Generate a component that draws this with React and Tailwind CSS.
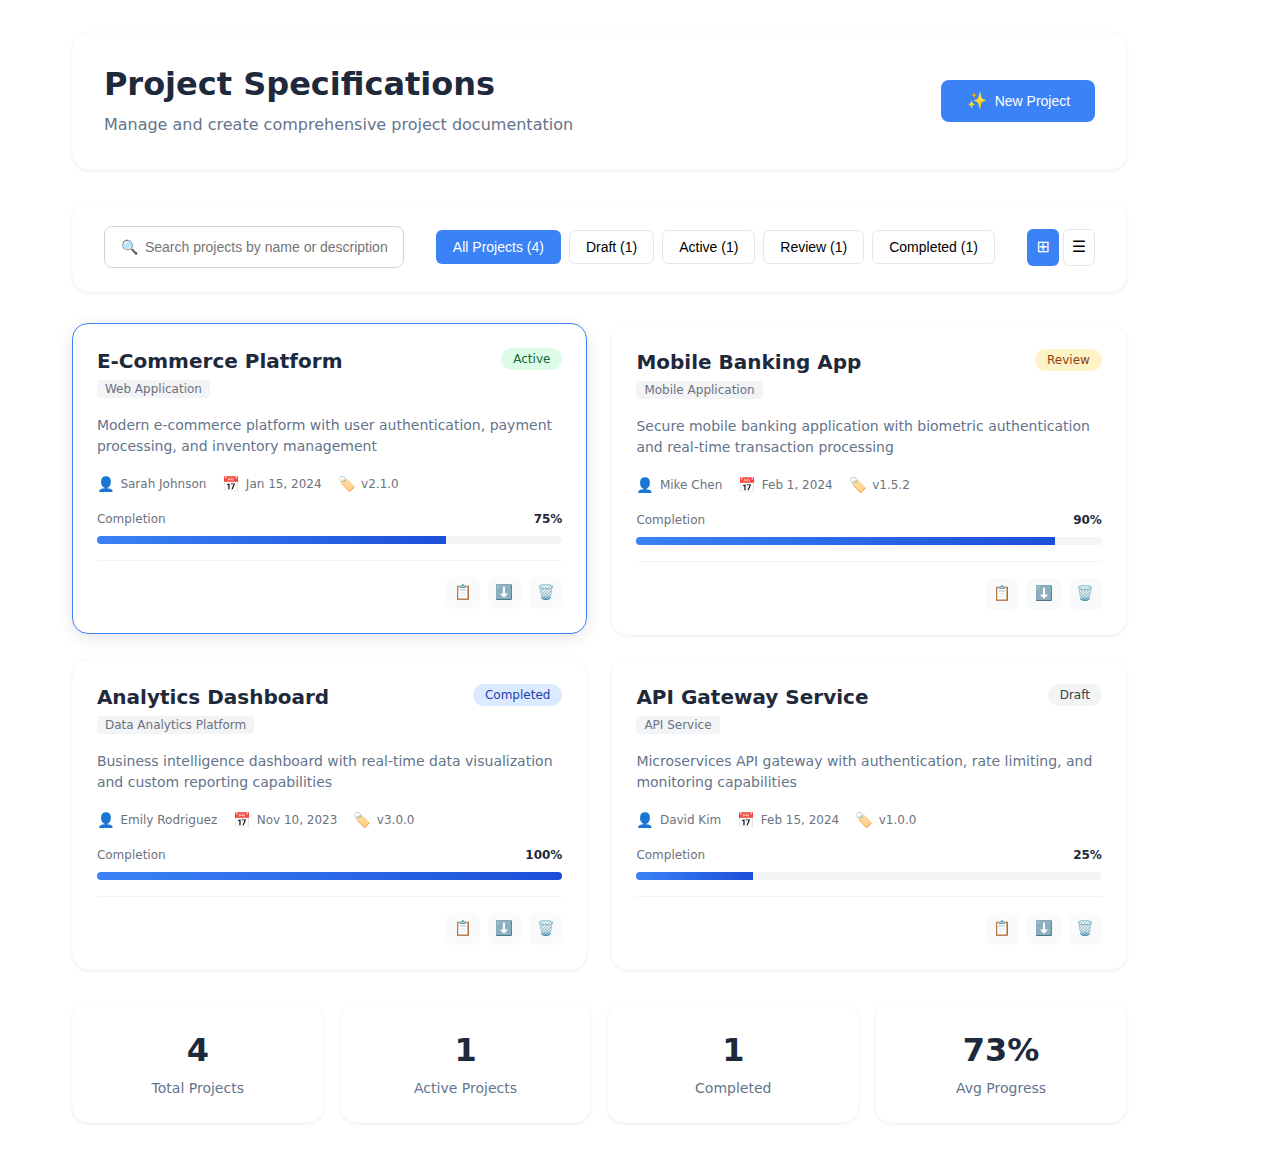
import React from 'react';

const projects = [
  {
    name: 'E-Commerce Platform', type: 'Web Application', status: 'Active', selected: true,
    badge: 'bg-[#dcfce7] text-[#166534]',
    desc: 'Modern e-commerce platform with user authentication, payment processing, and inventory management',
    owner: 'Sarah Johnson', date: 'Jan 15, 2024', version: 'v2.1.0', progress: 75,
  },
  {
    name: 'Mobile Banking App', type: 'Mobile Application', status: 'Review',
    badge: 'bg-[#fef3c7] text-[#92400e]',
    desc: 'Secure mobile banking application with biometric authentication and real-time transaction processing',
    owner: 'Mike Chen', date: 'Feb 1, 2024', version: 'v1.5.2', progress: 90,
  },
  {
    name: 'Analytics Dashboard', type: 'Data Analytics Platform', status: 'Completed',
    badge: 'bg-[#dbeafe] text-[#1e40af]',
    desc: 'Business intelligence dashboard with real-time data visualization and custom reporting capabilities',
    owner: 'Emily Rodriguez', date: 'Nov 10, 2023', version: 'v3.0.0', progress: 100,
  },
  {
    name: 'API Gateway Service', type: 'API Service', status: 'Draft',
    badge: 'bg-[#f3f4f6] text-[#374151]',
    desc: 'Microservices API gateway with authentication, rate limiting, and monitoring capabilities',
    owner: 'David Kim', date: 'Feb 15, 2024', version: 'v1.0.0', progress: 25,
  },
];

const filters = ['Draft (1)', 'Active (1)', 'Review (1)', 'Completed (1)'];

const stats = [
  { value: '4', label: 'Total Projects' },
  { value: '1', label: 'Active Projects' },
  { value: '1', label: 'Completed' },
  { value: '73%', label: 'Avg Progress' },
];

const panel = 'bg-white rounded-2xl border border-[#fbfbfc] shadow-[0_1px_3px_rgba(0,0,0,0.07)]';

function ProjectCard({ project }) {
  const cardStyle = project.selected
    ? 'border-[#3b82f6] shadow-[0_4px_16px_rgba(0,0,0,0.1)] -translate-y-px'
    : 'border-[#fbfbfc] shadow-[0_1px_3px_rgba(0,0,0,0.07)]';

  return (
    <div className={`bg-white rounded-2xl border h-[311px] px-6 pt-6 ${cardStyle}`}>
      <div className="flex justify-between items-start">
        <div>
          <h3 className="text-xl leading-[26px] font-bold text-[#1e293b]">{project.name}</h3>
          <span className="inline-block mt-[6px] px-2 h-[18px] rounded bg-[#f3f4f6] text-[#6b7280] text-xs leading-[18px]">{project.type}</span>
        </div>
        <span className={`px-3 h-[22px] rounded-full text-xs leading-[22px] font-medium ${project.badge}`}>{project.status}</span>
      </div>
      <p className="mt-[15px] text-sm leading-[21px] text-[#64748b]">{project.desc}</p>
      <div className="mt-[17px] flex gap-4 text-xs text-[#6b7280]">
        <span className="flex items-center gap-[5.5px]"><span className="text-[14.4px] leading-5">👤</span>{project.owner}</span>
        <span className="flex items-center gap-[5.5px]"><span className="text-[14.4px] leading-5">📅</span>{project.date}</span>
        <span className="flex items-center gap-[5.5px]"><span className="text-[14.4px] leading-5">🏷️</span>{project.version}</span>
      </div>
      <div className="mt-4 flex justify-between items-center text-xs leading-[18px]">
        <span className="text-[#6b7280]">Completion</span>
        <span className="font-bold text-[#1e293b]">{project.progress}%</span>
      </div>
      <div className="mt-2 h-2 rounded bg-[#f3f4f6] overflow-hidden">
        <div className="h-full bg-gradient-to-r from-[#3b82f6] to-[#1d4ed8]" style={{ width: `${project.progress}%` }} />
      </div>
      <div className="mt-4 pt-4 border-t border-[#f3f4f6] flex justify-end gap-2">
        {['📋', '⬇️', '🗑️'].map((icon) => (
          <button key={icon} className="w-[33.4px] h-8 rounded-lg bg-[#f8fafc] flex items-center justify-center text-[14.4px]">{icon}</button>
        ))}
      </div>
    </div>
  );
}

export default function App() {
  return (
    <div className="min-h-[1155px] bg-white font-['DejaVu_Sans',sans-serif] pt-8 pl-[71.9px]">
      <div className="w-[1055px]">
        <div className={`${panel} h-[138px] px-[31px] flex items-center justify-between`}>
          <div>
            <h1 className="text-[32px] leading-[38px] font-bold text-[#1e293b]">Project Specifications</h1>
            <p className="mt-[10px] text-base leading-6 text-[#64748b]">Manage and create comprehensive project documentation</p>
          </div>
          <button className="h-[42px] w-[154px] pl-px rounded-lg bg-[#3b82f6] text-white text-sm font-['Liberation_Sans',sans-serif] flex items-center justify-center gap-2">
            <span className="text-base">✨</span>New Project
          </button>
        </div>

        <div className={`${panel} mt-8 h-[90px] px-[31px] flex items-center gap-8 font-['Liberation_Sans',sans-serif]`}>
          <div className="w-[300px] h-[42px] border border-[#d1d5db] rounded-lg pl-4 flex items-center gap-[7px] text-sm text-[#757575] overflow-hidden whitespace-nowrap">
            <span>🔍</span>Search projects by name or description
          </div>
          <div className="flex gap-2 text-sm">
            <button className="h-[34px] px-[17px] rounded-md bg-[#3b82f6] text-white">All Projects (4)</button>
            {filters.map((f) => (
              <button key={f} className="h-[34px] px-4 rounded-md border border-[#e5e7eb] bg-white text-black">{f}</button>
            ))}
          </div>
          <div className="ml-auto flex gap-1">
            <button className="w-8 h-[37px] rounded-md bg-[#3b82f6] text-white font-['DejaVu_Sans',sans-serif] text-base">⊞</button>
            <button className="w-8 h-[37px] rounded-md border border-[#e5e7eb] bg-white text-black font-['DejaVu_Sans',sans-serif] text-base">☰</button>
          </div>
        </div>

        <div className="mt-8 grid grid-cols-2 gap-6">
          {projects.map((p) => <ProjectCard key={p.name} project={p} />)}
        </div>

        <div className="mt-8 grid grid-cols-4 gap-4">
          {stats.map((s) => (
            <div key={s.label} className={`${panel} h-[121px] flex flex-col items-center pt-[25px]`}>
              <div className="text-[32px] leading-[44px] font-bold text-[#1e293b]">{s.value}</div>
              <div className="mt-[6px] text-sm leading-[21px] text-[#64748b]">{s.label}</div>
            </div>
          ))}
        </div>
      </div>
    </div>
  );
}
